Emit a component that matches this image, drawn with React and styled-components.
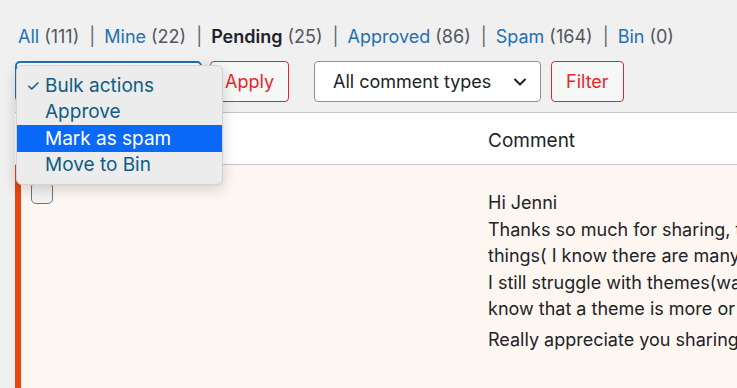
import React from "react";
import styled, { createGlobalStyle } from "styled-components";

const GlobalStyle = createGlobalStyle`
  html, body {
    margin: 0;
    padding: 0;
    background: #f0f0f1;
    overflow: hidden;
  }
  body {
    font-family: "Inter", "Noto Sans", sans-serif;
    color: #1d2327;
  }
`;

const filters = [
  { label: "All", count: 111 },
  { label: "Mine", count: 22 },
  { label: "Pending", count: 25, current: true },
  { label: "Approved", count: 86 },
  { label: "Spam", count: 164 },
  { label: "Bin", count: 0 },
];

const bulkOptions = [
  { label: "Bulk actions", checked: true },
  { label: "Approve" },
  { label: "Mark as spam", active: true },
  { label: "Move to Bin" },
];

const commentLines = [
  "Hi Jenni",
  "Thanks so much for sharing, this is a great list of useful",
  "things( I know there are many more out there) and",
  "I still struggle with themes(watching videos) and didn't",
  "know that a theme is more or less a skin on the site.",
  "Really appreciate you sharing this with us all.",
];

function App() {
  return (
    <>
      <GlobalStyle />
      <Page>
        <SubNav>
          {filters.map((f, i) => (
            <SubItem key={f.label}>
              {i > 0 && <Sep>|</Sep>}
              <SubLink current={f.current}>{f.label}</SubLink>
              <Count>({f.count})</Count>
            </SubItem>
          ))}
        </SubNav>

        <Toolbar>
          <BulkWrap>
            <BulkSelect />
            <Menu>
              {bulkOptions.map((o) => (
                <MenuItem key={o.label} active={o.active}>
                  <Check>{o.checked ? "✓" : ""}</Check>
                  {o.label}
                </MenuItem>
              ))}
            </Menu>
          </BulkWrap>
          <Button>Apply</Button>
          <TypeSelect>
            All comment types
            <svg width="16" height="16" viewBox="0 0 16 16" fill="none">
              <path
                d="M3 5.5l5 5 5-5"
                stroke="#1d2327"
                strokeWidth="2"
                strokeLinecap="round"
                strokeLinejoin="round"
              />
            </svg>
          </TypeSelect>
          <Button offset={2}>Filter</Button>
        </Toolbar>

        <Table>
          <HeadRow>
            <Cell />
            <Cell />
            <HeadCell>Comment</HeadCell>
          </HeadRow>
          <Row>
            <CheckCell>
              <Checkbox />
            </CheckCell>
            <Cell>
              <Avatar />
            </Cell>
            <CommentCell>
              {commentLines.map((line, i) => (
                <Line key={i} gap={i === commentLines.length - 1}>
                  {line}
                </Line>
              ))}
            </CommentCell>
          </Row>
        </Table>
      </Page>
    </>
  );
}

const Page = styled.div`
  padding: 24px 0 0 15px;
  width: 900px;
`;

const SubNav = styled.div`
  display: flex;
  align-items: center;
  padding-left: 3px;
  font-size: 18px;
  line-height: 26px;
  height: 26px;
`;

const SubItem = styled.span`
  display: flex;
  align-items: center;
`;

const Sep = styled.span`
  color: #646970;
  margin: 0 9px 0 10px;
`;

const SubLink = styled.span`
  color: ${(p) => (p.current ? "#1d2327" : "#2271b1")};
  font-weight: ${(p) => (p.current ? 600 : 400)};
`;

const Count = styled.span`
  color: #50575e;
  margin-left: 5px;
`;

const Toolbar = styled.div`
  display: flex;
  align-items: center;
  gap: 8px;
  margin-top: 11px;
  height: 41px;
`;

const BulkWrap = styled.div`
  position: relative;
  width: 187px;
  height: 41px;
`;

const BulkSelect = styled.div`
  box-sizing: border-box;
  width: 187px;
  height: 41px;
  border: 2px solid #2271b1;
  border-radius: 5px;
  background: #fff;
`;

const Menu = styled.div`
  position: absolute;
  top: 4px;
  left: 1px;
  width: 207px;
  box-sizing: border-box;
  padding: 6px 0 6px;
  background: #ececec;
  border: 1px solid #d3d3d3;
  border-radius: 6px;
  box-shadow: 0 4px 14px rgba(0, 0, 0, 0.18);
  z-index: 2;
`;

const MenuItem = styled.div`
  display: flex;
  align-items: center;
  height: 26.5px;
  font-size: 19px;
  color: ${(p) => (p.active ? "#fff" : "#0e5d84")};
  background: ${(p) => (p.active ? "#0a69f8" : "transparent")};
`;

const Check = styled.span`
  width: 28px;
  padding-left: 9px;
  box-sizing: border-box;
  font-size: 16px;
`;

const Button = styled.div`
  box-sizing: border-box;
  height: 41px;
  padding: 0 14px;
  display: flex;
  align-items: center;
  border: 1px solid #e6262a;
  border-radius: 4px;
  background: #f6f7f7;
  color: #e6262a;
  font-size: 18px;
  margin-left: ${(p) => p.offset || 0}px;
`;

const TypeSelect = styled.div`
  box-sizing: border-box;
  height: 41px;
  width: 227px;
  margin-left: 17px;
  padding: 0 12px 0 18px;
  display: flex;
  align-items: center;
  justify-content: space-between;
  border: 1px solid #8c8f94;
  border-radius: 4px;
  background: #fff;
  font-size: 18px;
  color: #1d2327;
`;

const Table = styled.div`
  margin-top: 10px;
  border-top: 1px solid #c3c4c7;
  background: #fff;
`;

const HeadRow = styled.div`
  display: grid;
  grid-template-columns: 45px 428px 1fr;
  height: 52px;
  padding-top: 3px;
  box-sizing: border-box;
  align-items: center;
  border-bottom: 1px solid #c3c4c7;
`;

const Cell = styled.div``;

const HeadCell = styled.div`
  font-size: 19px;
  color: #1d2327;
`;

const Row = styled.div`
  display: grid;
  grid-template-columns: 39px 428px 1fr;
  border-left: 6px solid #e8470f;
  background: #fef7f1;
  height: 240px;
`;

const CheckCell = styled.div`
  padding: 17px 0 0 10px;
`;

const Checkbox = styled.div`
  width: 22px;
  height: 22px;
  box-sizing: border-box;
  border: 1.5px solid #6b7580;
  border-radius: 5px;
  background: #f3f3f3;
`;

const Avatar = styled.div`
  margin: 13px 0 0 22px;
  width: 32px;
  height: 6px;
  border-radius: 3px;
  background: rgba(196, 160, 120, 0.25);
`;

const CommentCell = styled.div`
  padding-top: 25px;
  font-size: 18px;
  line-height: 26.5px;
  color: #1d2327;
  white-space: nowrap;
`;

const Line = styled.div`
  margin-top: ${(p) => (p.gap ? "4px" : "0")};
`;

export default App;
